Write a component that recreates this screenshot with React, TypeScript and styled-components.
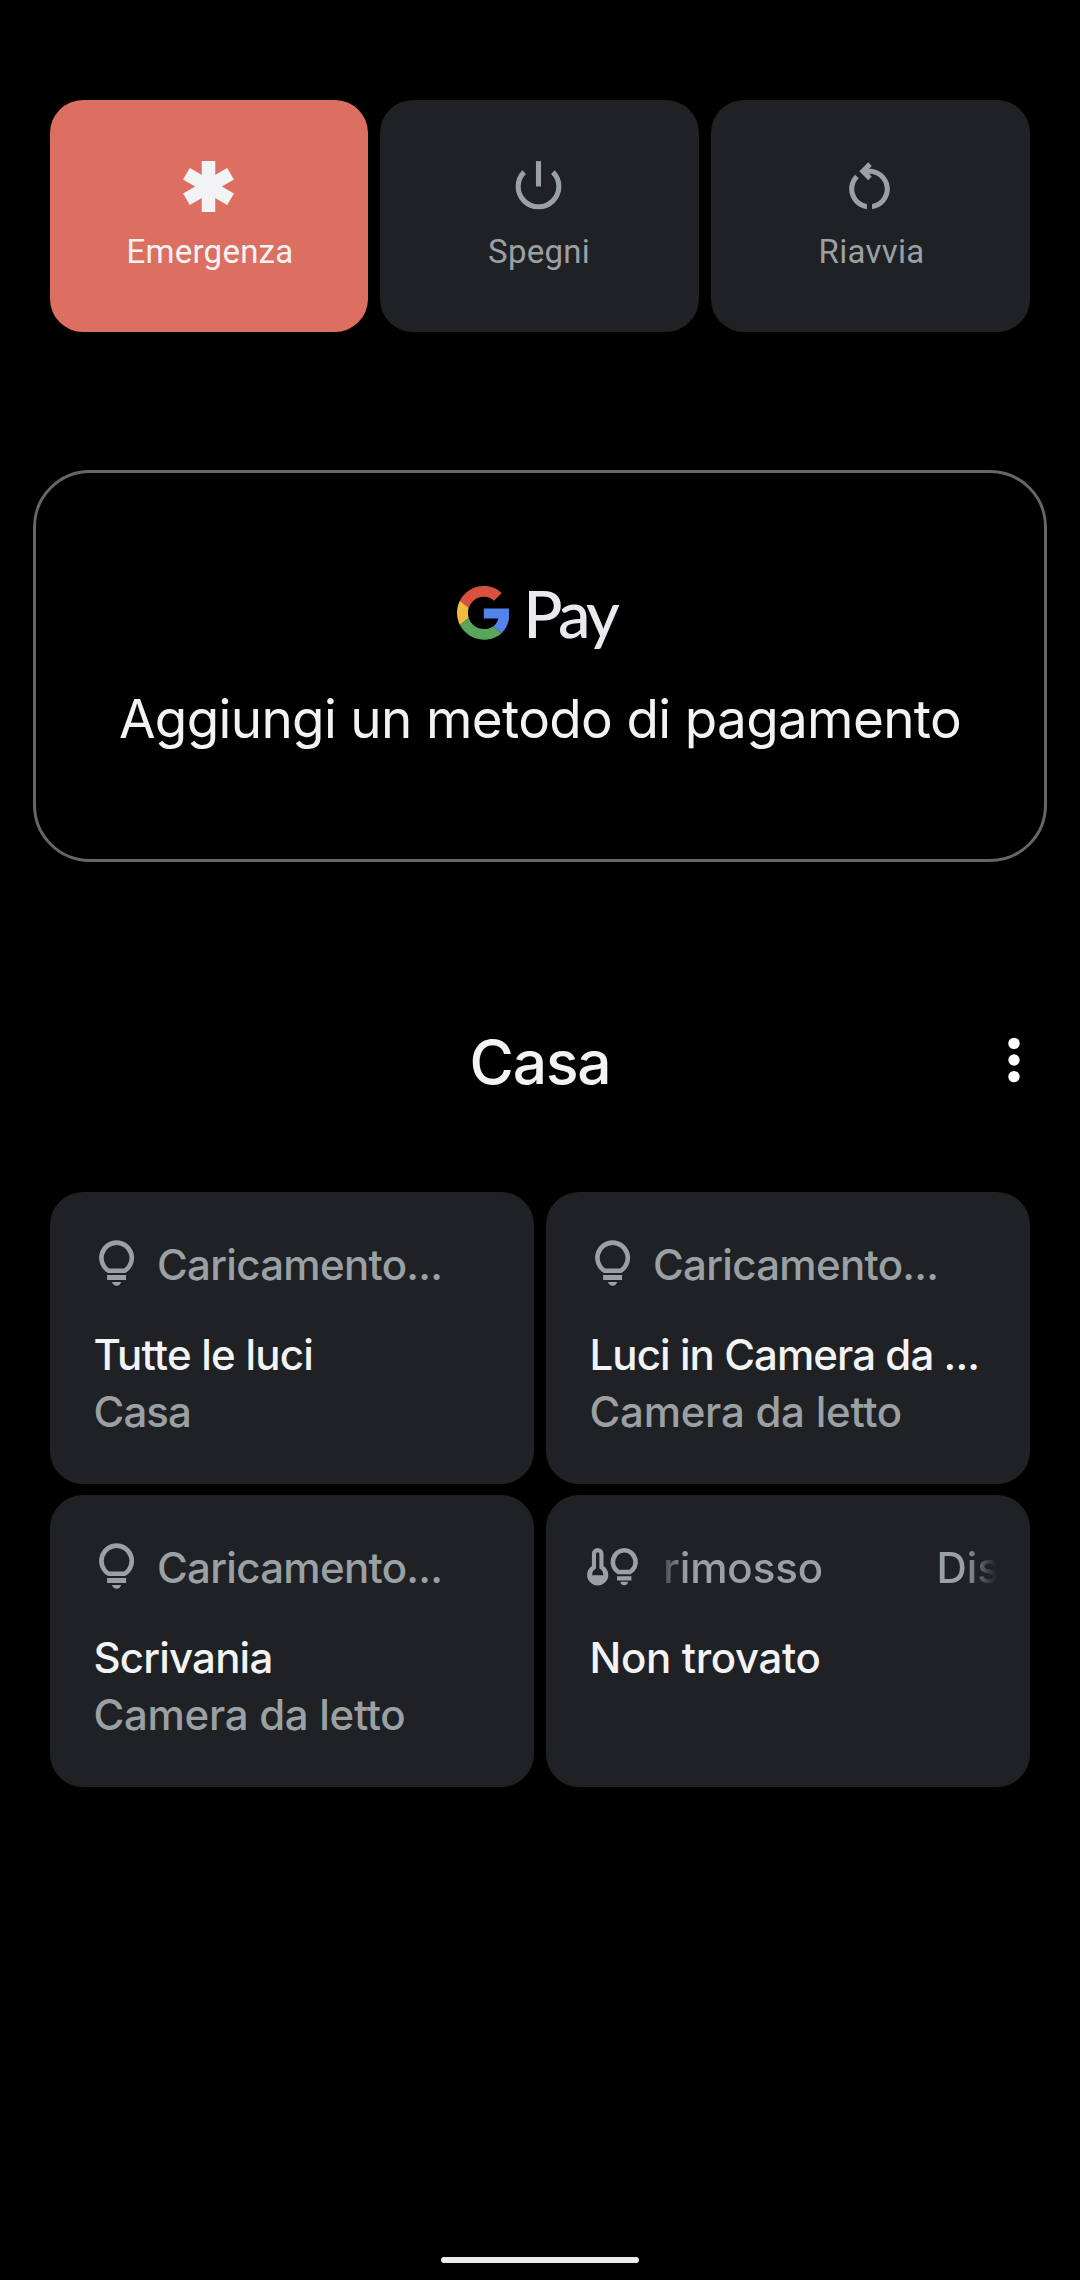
import React from "react";
import styled, { createGlobalStyle } from "styled-components";

const SANS = `Inter, "Liberation Sans", sans-serif`;
const MUTED = "#9aa0a3";
const BRIGHT = "#f1f3f4";

const GlobalStyle = createGlobalStyle`
  html, body {
    margin: 0;
    background: #000;
  }
  *, *::before, *::after {
    box-sizing: border-box;
  }
`;

const Screen = styled.main`
  display: flex;
  flex-direction: column;
  width: 1080px;
  height: 2280px;
  padding: 100px 0 17px;
  overflow: hidden;
  background: #000;
  color: ${BRIGHT};
  font-family: ${SANS};
`;

/* Power actions */

const Actions = styled.section`
  display: grid;
  grid-template-columns: 318px 319px 319px;
  gap: 12px;
  height: 232px;
  padding: 0 50px;
`;

const Action = styled.button<{ $emergency?: boolean }>`
  display: flex;
  flex-direction: column;
  align-items: center;
  gap: 15px;
  padding: 56px 0 0;
  border: 0;
  border-radius: 33px;
  background: ${(p) => (p.$emergency ? "#dd6f62" : "#202124")};
  color: ${(p) => (p.$emergency ? BRIGHT : MUTED)};
`;

const ActionIcon = styled.svg`
  width: 61px;
  height: 61px;
  margin-left: -2px;
`;

const ActionLabel = styled.span<{ $nudge: number }>`
  padding-left: ${(p) => Math.max(p.$nudge, 0)}px;
  padding-right: ${(p) => Math.max(-p.$nudge, 0)}px;
  font: 400 33px/40px Roboto, "Liberation Sans", sans-serif;
  letter-spacing: 0.25px;
`;

/* Payment card */

const PayCard = styled.section`
  display: flex;
  flex-direction: column;
  align-items: center;
  height: 392px;
  margin: 138px 33px 0;
  padding-top: 107px;
  border: 3px solid #666;
  border-radius: 57px;
`;

const PayBrand = styled.div`
  display: flex;
  gap: 14px;
  height: 64px;
  margin: 0 7px 0 0;
`;

const GoogleMark = styled.svg`
  width: 52.5px;
  height: 53.7px;
  margin-top: 6.3px;
`;

const PayWord = styled.span`
  padding-top: 1px;
  color: #e8eaed;
  font: 500 65px/64px Lato, sans-serif;
  letter-spacing: -3.5px;
`;

const PayPrompt = styled.p`
  margin: 43px 0 0;
  font-size: 53px;
  line-height: 64px;
  letter-spacing: -0.65px;
  white-space: nowrap;
`;

/* Home controls */

const HomeHeader = styled.header`
  display: grid;
  grid-template-columns: 1fr auto 1fr;
  height: 72px;
  margin: 164px 0 94px;
  padding: 0 50px;
`;

const HomeTitle = styled.h1`
  grid-column: 2;
  margin: 0;
  font-size: 60.5px;
  font-weight: 500;
  line-height: 72px;
  letter-spacing: -1.2px;
`;

const MenuIcon = styled.svg`
  justify-self: end;
  width: 32px;
  height: 68px;
  fill: #fff;
`;

const Tiles = styled.section`
  display: grid;
  grid-template-columns: repeat(2, 1fr);
  grid-auto-rows: 292px;
  gap: 11px 12px;
  padding: 0 50px;
`;

const Tile = styled.article`
  min-width: 0;
  padding: 48px 33px 0 43.5px;
  border-radius: 33px;
  background: #202124;
  font-size: 42px;
  font-weight: 500;
  line-height: 57px;
  white-space: nowrap;
`;

const StatusRow = styled.div`
  display: flex;
  height: 50px;
  margin-bottom: 36px;
  color: ${MUTED};
  line-height: 50px;
`;

const StatusIcon = styled.svg`
  flex: none;
  width: 63.5px;
  height: 48px;
  overflow: visible;
`;

const Status = styled.span`
  letter-spacing: -0.7px;
`;

const Marquee = styled.div`
  display: flex;
  flex: 1;
  gap: 113.5px;
  min-width: 0;
  padding-left: 10px;
  overflow: hidden;
  letter-spacing: -0.1px;
  mask-image: linear-gradient(
    to right,
    transparent,
    #000 33px,
    #000 calc(100% - 33px),
    transparent
  );
`;

const DeviceName = styled.div<{ $tracking: number }>`
  letter-spacing: ${(p) => p.$tracking}px;
`;

const DeviceRoom = styled.div<{ $tracking: number }>`
  color: ${MUTED};
  letter-spacing: ${(p) => p.$tracking}px;
`;

const GestureBar = styled.div`
  align-self: center;
  width: 198px;
  height: 6px;
  margin-top: auto;
  border-radius: 3px;
  background: #ebebeb;
`;

const EmergencyGlyph = () => (
  <ActionIcon viewBox="0 0 61 61" fill="currentColor">
    {[0, 60, 120].map((angle) => (
      <rect
        key={angle}
        x="23.75"
        y="5"
        width="13.5"
        height="51"
        transform={`rotate(${angle} 30.5 30.5)`}
      />
    ))}
  </ActionIcon>
);

const PowerGlyph = () => (
  <ActionIcon viewBox="0 0 24 24" fill="none" stroke="currentColor" strokeWidth="2">
    <path d="M12 2v10" />
    <path d="M17.66 6.34a8 8 0 1 1-11.32 0" />
  </ActionIcon>
);

const RestartGlyph = () => (
  <ActionIcon viewBox="0 0 24 24" fill="currentColor">
    <path d="M6 13c0-1.65.67-3.15 1.76-4.24L6.34 7.34C4.9 8.79 4 10.79 4 13c0 4.08 3.05 7.44 7 7.93v-2.02c-2.83-.48-5-2.94-5-5.91z" />
    <path d="M20 13c0-4.42-3.58-8-8-8-.06 0-.12.01-.18.01l1.09-1.09L11.5 2.5 8 6l3.5 3.5 1.41-1.41-1.08-1.08c.06 0 .12-.01.17-.01 3.31 0 6 2.69 6 6 0 2.97-2.17 5.43-5 5.91v2.02c3.95-.49 7-3.85 7-7.93z" />
  </ActionIcon>
);

const BulbIcon = () => (
  <StatusIcon fill="currentColor">
    <g transform="translate(5.1 0.3)">
      <path
        fillRule="evenodd"
        d="M17.5 0A17.5 17.5 0 0 0 9 32.8H26A17.5 17.5 0 0 0 17.5 0zM17.5 4.6A13 13 0 0 1 25 28.1H10A13 13 0 0 1 17.5 4.6z"
      />
      <path d="M8 34.7h19v5H8zM13 41.7h9a4.6 4.6 0 0 1-9 0z" />
    </g>
  </StatusIcon>
);

const ClimateIcon = () => (
  <StatusIcon fill="currentColor">
    <path
      fillRule="evenodd"
      d="M1.9 10.8a5.8 5.8 0 0 1 11.6 0V23A10.6 10.6 0 1 1 1.9 23zM6 11v14.4A7.3 7.3 0 0 0 2.2 32.3H13.2A7.3 7.3 0 0 0 9.4 25.4V11a1.7 1.7 0 0 0-3.4 0z"
    />
    <g transform="translate(20.2 5)">
      <path
        fillRule="evenodd"
        d="M14 0A14 14 0 0 0 7.4 26.2H20.6A14 14 0 0 0 14 0zM14 4.5A9.6 9.6 0 0 1 19.2 21.7H8.8A9.6 9.6 0 0 1 14 4.5z"
      />
      <path d="M6.8 28.2h14.4v4.3H6.8zM10.3 33.8h7.4a3.7 3.4 0 0 1-7.4 0z" />
    </g>
  </StatusIcon>
);

const GoogleG = () => (
  <GoogleMark viewBox="0 0 47 48">
    <path fill="#d8513e" d="M24 9.5c3.54 0 6.71 1.22 9.21 3.6l6.85-6.85C35.9 2.38 30.47 0 24 0 14.62 0 6.51 5.38 2.56 13.22l7.98 6.19C12.43 13.72 17.74 9.5 24 9.5z" />
    <path fill="#5383ec" d="M46.98 24.55c0-1.57-.15-3.09-.38-4.55H24v9.02h12.94c-.58 2.96-2.26 5.48-4.78 7.18l7.73 6c4.51-4.18 7.09-10.36 7.09-17.65z" />
    <path fill="#f0bc42" d="M10.53 28.59c-.48-1.45-.76-2.99-.76-4.59s.27-3.14.76-4.59l-7.98-6.19C.92 16.46 0 20.12 0 24c0 3.88.92 7.54 2.56 10.78l7.97-6.19z" />
    <path fill="#58a55c" d="M24 48c6.48 0 11.93-2.13 15.89-5.81l-7.73-6c-2.15 1.45-4.92 2.3-8.16 2.3-6.26 0-11.57-4.22-13.47-9.91l-7.98 6.19C6.51 42.62 14.62 48 24 48z" />
  </GoogleMark>
);

const devices = [
  { name: "Tutte le luci", nameTracking: -0.78, room: "Casa", roomTracking: -0.9 },
  { name: "Luci in Camera da ...", nameTracking: -0.93, room: "Camera da letto", roomTracking: -0.26 },
  { name: "Scrivania", nameTracking: -0.8, room: "Camera da letto", roomTracking: -0.3 },
];

export default function App() {
  return (
    <>
      <GlobalStyle />
      <Screen>
        <Actions>
          <Action $emergency>
            <EmergencyGlyph />
            <ActionLabel $nudge={2}>Emergenza</ActionLabel>
          </Action>
          <Action>
            <PowerGlyph />
            <ActionLabel $nudge={-1}>Spegni</ActionLabel>
          </Action>
          <Action>
            <RestartGlyph />
            <ActionLabel $nudge={2}>Riavvia</ActionLabel>
          </Action>
        </Actions>

        <PayCard>
          <PayBrand>
            <GoogleG />
            <PayWord>Pay</PayWord>
          </PayBrand>
          <PayPrompt>Aggiungi un metodo di pagamento</PayPrompt>
        </PayCard>

        <HomeHeader>
          <HomeTitle>Casa</HomeTitle>
          <MenuIcon viewBox="0 0 32 68">
            <circle cx="16" cy="17.4" r="5.7" />
            <circle cx="16" cy="34" r="5.7" />
            <circle cx="16" cy="50.6" r="5.7" />
          </MenuIcon>
        </HomeHeader>

        <Tiles>
          {devices.map((device) => (
            <Tile key={device.name}>
              <StatusRow>
                <BulbIcon />
                <Status>Caricamento...</Status>
              </StatusRow>
              <DeviceName $tracking={device.nameTracking}>{device.name}</DeviceName>
              <DeviceRoom $tracking={device.roomTracking}>{device.room}</DeviceRoom>
            </Tile>
          ))}
          <Tile>
            <StatusRow>
              <ClimateIcon />
              <Marquee>
                <span>rimosso</span>
                <span>Dis</span>
              </Marquee>
            </StatusRow>
            <DeviceName $tracking={-0.34}>Non trovato</DeviceName>
          </Tile>
        </Tiles>

        <GestureBar />
      </Screen>
    </>
  );
}
